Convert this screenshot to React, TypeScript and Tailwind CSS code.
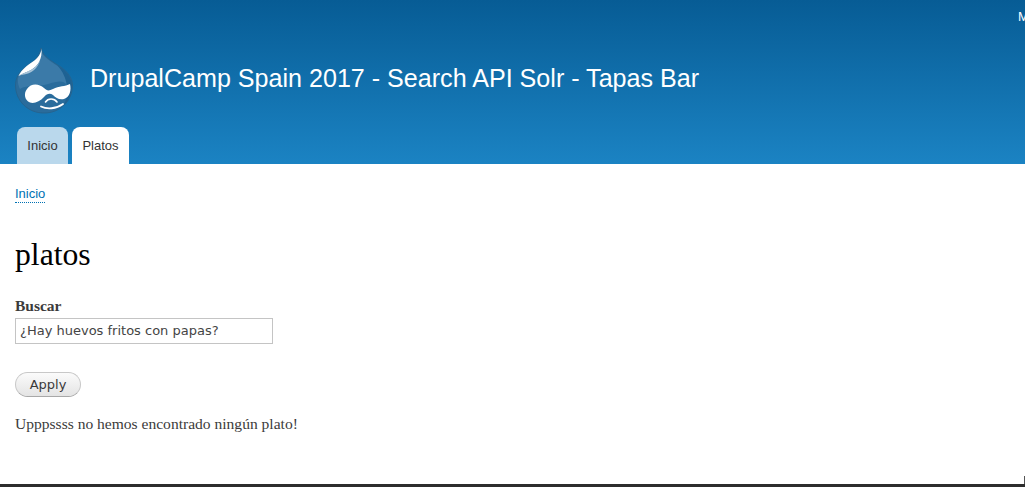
const sans = "font-['Liberation_Sans',Arial,sans-serif]";

function DrupalLogo() {
  return (
    <svg width="58" height="67" viewBox="0 0 58 67" className="shrink-0">
      {/* drop */}
      <path
        d="M26 1 C27 7 33 12 41 17 C50 22 57 29 57.5 38 C57.5 54 45 66 29 66 C13 66 0.5 54 0.5 38 C0.5 28 8 21 16 16 C21 13 25 8 26 1 Z"
        fill="#2a6c9c"
        stroke="#26648f"
        strokeWidth="1"
      />
      {/* lighter upper body */}
      <path
        d="M27 6 C29 10 35 14 41 18 C47 21 51 25 53 29 C54 36 54 42 52 38 C47 31 38 36 29 38 C20 40 10 38 5 42 C3 38 2 33 4 28 C10 27 20 24 27 6 Z"
        fill="#3b7aa8"
      />
      {/* darker right edge */}
      <path
        d="M42 18 C51 23 56.5 30 57 38 C57 46 54 53 49 58 C54 47 54 31 42 18 Z"
        fill="#1e6293"
      />
      {/* highlight */}
      <path
        d="M26.5 1.5 C26 7 23 11 18 14.5 C12 18.5 7 22 3.5 29 C8 26.5 12 25 16 23 C23 19 27.5 12 26.5 1.5 Z"
        fill="#ffffff"
      />
      <path d="M3.5 29 C8 26 12 25 16 23 C20 21 23 18 25 14 C23 20 18 25 13 26.5 C9 27.5 6 28 3.5 29 Z" fill="#a8c3d7" />
      {/* face */}
      <path
        d="M12 42 C16 36 24 36.5 29 41 C32 44 34 44 38 42 C44 39 50 39.5 55 37 C56.5 43 55 50 49 52 C44 53 41 51 38 48 C35 46 32 46.5 29 50 C25 54.5 19 57 15 55.5 C9.5 53.5 8.5 46 12 42 Z"
        fill="#ffffff"
      />
      <path d="M26 59.5 C32 62.5 41 62 48 57" fill="none" stroke="#ffffff" strokeWidth="1.8" strokeLinecap="round" />
      <path d="M30.5 55 C33 51 39 51 42 55" fill="none" stroke="#ffffff" strokeWidth="1.6" strokeLinecap="round" />
    </svg>
  );
}

export default function App() {
  return (
    <div className="h-[487px] w-[1025px] overflow-hidden bg-white flex flex-col relative">
      {/* Header */}
      <header className={`h-[164px] bg-[linear-gradient(#075c95,#1b83c3)] flex flex-col ${sans}`}>
        <div className="h-[33px] flex justify-end overflow-hidden">
          <span className="text-[13px] leading-[33px] text-white whitespace-nowrap w-[7px]">Mi cuenta</span>
        </div>
        <div className="flex items-start pl-[15px] pt-[14px]">
          <DrupalLogo />
          <h1 className="ml-[17px] mt-[16px] text-[25.1px] leading-[30px] text-white font-normal whitespace-nowrap">
            DrupalCamp Spain 2017 - Search API Solr - Tapas Bar
          </h1>
        </div>
        <nav className="mt-auto flex gap-[4px] pl-[17px] text-[13px] text-[#333333]">
          <a className="h-[37px] w-[51px] rounded-t-[8px] bg-[#bad8ec] flex items-center justify-center">Inicio</a>
          <a className="h-[37px] w-[57px] rounded-t-[8px] bg-white flex items-center justify-center">Platos</a>
        </nav>
      </header>

      {/* Content */}
      <main className="flex-1 px-[15px] font-['Liberation_Serif','DejaVu_Serif',serif] text-[#3b3b3b]">
        <div className={`mt-[22px] text-[13px] leading-[16px] ${sans}`}>
          <a className="text-[#0071b3] border-b border-dotted border-[#0071b3] inline-block">Inicio</a>
        </div>
        <h2 className="mt-[34px] text-[31.7px] leading-[36px] text-black font-normal">platos</h2>
        <label className="block mt-[25px] text-[15.5px] leading-[16px] font-bold">Buscar</label>
        <div className="mt-[4px] h-[26px] w-[258px] border border-[#c4c4c4] px-[4px] font-['DejaVu_Sans',sans-serif] text-[13px] leading-[24px] text-[#444444] whitespace-nowrap">
          ¿Hay huevos fritos con papas?
        </div>
        <button className="block mt-[28px] h-[25px] w-[66px] rounded-[13px] border border-[#c8c8c8] border-b-[#a8a8a8] bg-[linear-gradient(#fbfbfb,#e4e4e4)] font-['DejaVu_Sans',sans-serif] text-[13px] text-[#3a3a3a]">
          Apply
        </button>
        <p className="mt-[18px] text-[15.55px] leading-[18px]">Upppssss no hemos encontrado ningún plato!</p>
      </main>

      {/* Bottom edge */}
      <div className="h-[3px] bg-[#2d2d2d]" />
      <div className="absolute right-0 bottom-[3px] h-[8px] w-[1px] bg-[#555555]" />
    </div>
  );
}
